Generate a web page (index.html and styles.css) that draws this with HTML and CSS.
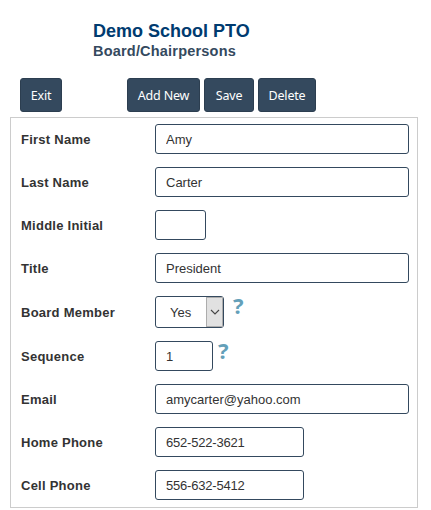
FILE: index.html
```html
<!DOCTYPE html>
<html lang="en">
<head>
  <meta charset="UTF-8">
  <title>Board/Chairpersons</title>
  <link rel="stylesheet" href="styles.css">
</head>
<body>

  <div class="heading">
    <h1>Demo School PTO</h1>
    <h2>Board/Chairpersons</h2>
  </div>

  <div class="buttons">
    <button class="exit">Exit</button>
    <button class="add">Add New</button>
    <button class="save">Save</button>
    <button class="delete">Delete</button>
  </div>

  <form class="panel">
    <div class="row">
      <label for="first">First Name</label>
      <input type="text" id="first" value="Amy">
    </div>
    <div class="row">
      <label for="last">Last Name</label>
      <input type="text" id="last" value="Carter">
    </div>
    <div class="row">
      <label for="middle">Middle Initial</label>
      <input type="text" id="middle" class="initial">
    </div>
    <div class="row">
      <label for="title">Title</label>
      <input type="text" id="title" value="President">
    </div>
    <div class="row">
      <label for="member">Board Member</label>
      <div class="select">
        <select id="member">
          <option>Yes</option>
          <option>No</option>
        </select>
        <span class="arrow">
          <svg width="10" height="6" viewBox="0 0 10 6"><path d="M1 1l4 4 4-4" fill="none" stroke="#444" stroke-width="1.1"/></svg>
        </span>
      </div>
      <span class="help help-member">?</span>
    </div>
    <div class="row">
      <label for="sequence">Sequence</label>
      <input type="text" id="sequence" class="sequence" value="1">
      <span class="help">?</span>
    </div>
    <div class="row">
      <label for="email">Email</label>
      <input type="text" id="email" value="amycarter@yahoo.com">
    </div>
    <div class="row">
      <label for="home">Home Phone</label>
      <input type="text" id="home" class="phone" value="652-522-3621">
    </div>
    <div class="row">
      <label for="cell">Cell Phone</label>
      <input type="text" id="cell" class="phone" value="556-632-5412">
    </div>
  </form>

</body>
</html>
```

FILE: styles.css
```css
* {
  box-sizing: border-box;
}

body {
  margin: 0;
  background: #fff;
  color: #333;
  font-family: "Liberation Sans", Arial, sans-serif;
  font-size: 13px;
  overflow: hidden;
}

.heading {
  padding: 20px 0 0 93px;
}

h1, h2 {
  margin: 0;
  font-weight: bold;
}

h1 {
  color: #003b70;
  font-size: 18px;
  line-height: 22px;
}

h2 {
  color: #34495e;
  font-size: 14.5px;
  line-height: 18px;
  letter-spacing: 0.2px;
}

.buttons {
  display: flex;
  gap: 4px;
  padding: 18px 0 0 20px;
}

button {
  height: 34px;
  padding: 0;
  border: 1px solid #2c3e50;
  border-radius: 3px;
  background: #34495e;
  color: #fff;
  font-family: "Noto Sans", sans-serif;
  font-size: 12.5px;
  letter-spacing: -0.2px;
}

.exit {
  width: 42px;
  margin-right: 61px;
}

.add {
  width: 73px;
}

.save {
  width: 50px;
}

.delete {
  width: 58px;
}

.panel {
  display: flex;
  flex-direction: column;
  gap: 13px;
  width: 408px;
  margin: 5px 0 0 10px;
  padding: 6px 8px 7px 10px;
  border: 1px solid #ccc;
}

.row {
  display: flex;
  align-items: center;
}

label {
  width: 134px;
  font-size: 13px;
  font-weight: bold;
  letter-spacing: 0.25px;
}

input, select {
  width: 254px;
  height: 30px;
  padding: 0 10px;
  border: 1px solid #34495e;
  border-radius: 3px;
  background: #fff;
  color: #333;
  font-family: inherit;
  font-size: 13px;
}

.initial {
  width: 51px;
}

.sequence {
  width: 58px;
}

.phone {
  width: 149px;
  letter-spacing: -0.2px;
}

.select {
  position: relative;
  width: 69px;
  height: 32px;
}

select {
  appearance: none;
  width: 69px;
  height: 32px;
  padding: 0 14px;
}

.arrow {
  position: absolute;
  top: 1px;
  right: 1px;
  display: flex;
  align-items: center;
  justify-content: center;
  width: 17px;
  height: 30px;
  border: 1px solid #adadad;
  background: #e1e1e1;
  pointer-events: none;
}

.help {
  align-self: flex-start;
  margin-left: 5px;
  color: #64a0b9;
  font-family: "Noto Sans", sans-serif;
  font-size: 22px;
  font-weight: bold;
  line-height: 18px;
}

.help-member {
  margin-left: 9px;
}
```
